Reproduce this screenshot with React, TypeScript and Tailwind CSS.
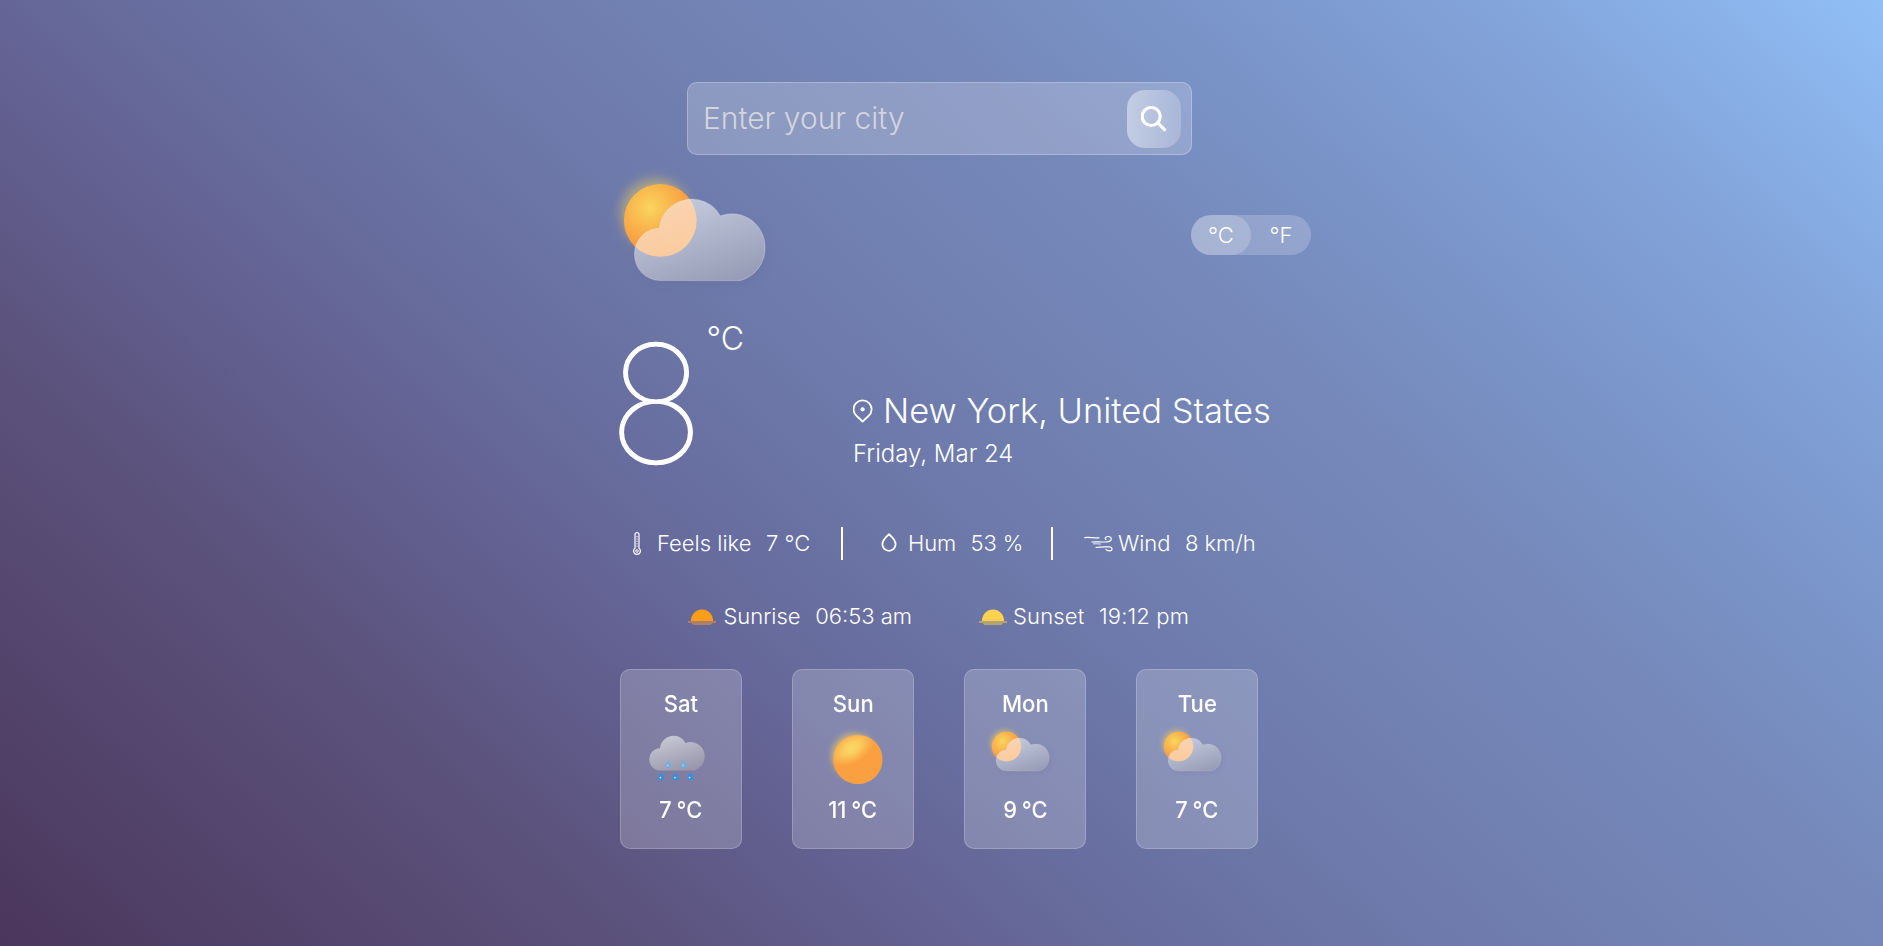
import type { ReactNode } from "react";

const CLOUD =
  "M60 120.6 A26 26 0 0 1 34.4 94.5 A26 26 0 0 1 59.4 68 A32.6 32.6 0 0 1 120.3 55.8 A33.2 33.2 0 0 1 165 87.5 A33.2 33.2 0 0 1 140 120.6 Z";

function PartlyCloudy({ id, className }: { id: string; className: string }) {
  return (
    <svg viewBox="0 0 200 140" className={className} aria-hidden="true">
      <defs>
        <radialGradient id={`${id}-sun`} cx="0.36" cy="0.32" r="0.56">
          <stop offset="0" stopColor="#fad560" />
          <stop offset="0.25" stopColor="#f9c656" />
          <stop offset="1" stopColor="#fb9a3e" />
        </radialGradient>
        <linearGradient id={`${id}-cloud`} x1="0.2" y1="0" x2="0.75" y2="1">
          <stop offset="0" stopColor="#c6cce0" />
          <stop offset="1" stopColor="#979db6" />
        </linearGradient>
        <linearGradient id={`${id}-edge`} x1="0" y1="0" x2="1" y2="1">
          <stop offset="0" stopColor="#ffffff" stopOpacity="0.1" />
          <stop offset="1" stopColor="#ffffff" stopOpacity="0.3" />
        </linearGradient>
        <linearGradient id={`${id}-warm`} x1="0.2" y1="0" x2="0.5" y2="1">
          <stop offset="0" stopColor="#f8d8ba" />
          <stop offset="1" stopColor="#fbcb9f" />
        </linearGradient>
        <clipPath id={`${id}-clip`}>
          <path d={CLOUD} />
        </clipPath>
        <filter id={`${id}-blur`} x="-50%" y="-50%" width="200%" height="200%">
          <feGaussianBlur stdDeviation="6" />
        </filter>
      </defs>
      <circle cx="55" cy="53" r="34" fill="#f6d25a" opacity="0.5" filter={`url(#${id}-blur)`} />
      <path d={CLOUD} fill="#5b6190" opacity="0.15" filter={`url(#${id}-blur)`} transform="translate(4 5)" />
      <circle cx="60.3" cy="60.4" r="36.4" fill={`url(#${id}-sun)`} />
      <path d={CLOUD} fill={`url(#${id}-cloud)`} />
      <circle cx="60.3" cy="60.4" r="36.4" fill={`url(#${id}-warm)`} clipPath={`url(#${id}-clip)`} />
      <path d={CLOUD} fill="none" stroke={`url(#${id}-edge)`} strokeWidth="1" />
    </svg>
  );
}

function Drop({ x, y, light }: { x: number; y: number; light?: boolean }) {
  return (
    <g transform={`translate(${x} ${y})`} opacity={light ? 0.75 : 1}>
      <path d="M0.3 -4.2 C1.8 -2.6 2.8 -1 2.8 0.6 A2.8 2.9 0 0 1 -2.8 0.6 C-2.8 -1 -1.4 -2.6 0.3 -4.2Z" fill={light ? "#63b1ea" : "#368fdb"} />
      <circle cx="-0.7" cy="0.8" r="0.9" fill="#c4e6ff" />
    </g>
  );
}

function RainCloud() {
  return (
    <svg viewBox="0 0 82 57" className="h-[57px] w-[82px] overflow-visible" aria-hidden="true">
      <defs>
        <linearGradient id="rain-cloud" x1="0.25" y1="0" x2="0.75" y2="1">
          <stop offset="0" stopColor="#c9c9d6" />
          <stop offset="1" stopColor="#9795aa" />
        </linearGradient>
      </defs>
      <g transform="translate(-3.3 -2.7) scale(0.424)">
        <path d={CLOUD} fill="url(#rain-cloud)" />
      </g>
      <Drop x={30.3} y={42.6} light />
      <Drop x={45.7} y={42.6} light />
      <Drop x={23.1} y={54.8} />
      <Drop x={37.7} y={54.8} />
      <Drop x={52.3} y={54.8} />
    </svg>
  );
}

function Sunny() {
  return (
    <svg viewBox="0 0 82 57" className="h-[57px] w-[82px] overflow-visible" aria-hidden="true">
      <defs>
        <radialGradient id="sunny" cx="0" cy="0" r="1" gradientUnits="userSpaceOnUse" gradientTransform="translate(41.5 26) rotate(-30) scale(25 15)">
          <stop offset="0" stopColor="#fad866" />
          <stop offset="0.3" stopColor="#fad060" />
          <stop offset="1" stopColor="#fba040" />
        </radialGradient>
        <filter id="sunny-blur" x="-50%" y="-50%" width="200%" height="200%">
          <feGaussianBlur stdDeviation="3" />
        </filter>
      </defs>
      <circle cx="44" cy="33.5" r="22" fill="#f4cf60" opacity="0.7" filter="url(#sunny-blur)" />
      <circle cx="47.9" cy="37.5" r="24.6" fill="url(#sunny)" />
    </svg>
  );
}

function HalfSun({ color, base }: { color: string; base: string }) {
  return (
    <svg viewBox="0 0 28 17" className="h-[17px] w-7" aria-hidden="true">
      <path d="M3 12 A11 11.5 0 0 1 25 12 Z" fill={color} />
      <path d="M0 12 H28 V14 H24.5 L22.5 16 H5.5 L3.5 14 H0Z" fill={base} />
    </svg>
  );
}

function Stat({ icon, label, value, className }: { icon: ReactNode; label: string; value: string; className: string }) {
  return (
    <div className={`flex items-center whitespace-nowrap ${className}`}>
      {icon}
      <span>{label}</span>
      <span className="ml-[14.6px]">{value}</span>
    </div>
  );
}

function DayCard({ day, temp, icon }: { day: string; temp: string; icon: ReactNode }) {
  return (
    <li className="flex h-[180px] w-[122px] flex-col items-center rounded-[10px] border border-white/20 bg-white/20 pt-[19px] text-[23px] leading-[30px] font-medium">
      <span className="scale-x-[0.96]">{day}</span>
      <div className="mt-[3px] mr-[4px] flex h-[57px] w-[82px]">{icon}</div>
      <span className="mt-4 scale-x-[0.95] [word-spacing:-1px]">{temp}</span>
    </li>
  );
}

export default function App() {
  return (
    <div className="h-[946px] overflow-hidden bg-[linear-gradient(43deg,#4b365c_0%,#5b527c_22%,#625f8f_31%,#666b9c_38%,#6d79aa_49%,#7182b3_58%,#7688ba_66%,#7a95c9_76%,#82a3da_86%,#90bff6_100%)] font-['Inter','Noto_Sans',sans-serif] font-light text-white">
      <main className="mx-auto w-[643px] pt-[82px]">
        <form className="ml-[67px] flex h-[73px] w-[505px] items-center justify-between rounded-[10px] border border-white/25 bg-white/20 pr-[10px] pl-[15px]">
          <input
            type="text"
            placeholder="Enter your city"
            className="h-full w-[400px] bg-transparent pb-0.5 text-[30px] font-light outline-none placeholder:text-[#d4d5dc]"
          />
          <button
            type="button"
            aria-label="Search"
            className="flex h-[58px] w-[54px] items-center justify-center rounded-[18px] bg-linear-to-r from-white/45 to-white/20"
          >
            <svg viewBox="0 0 26 26" className="h-[26px] w-[26px]" fill="none" stroke="#fff" strokeWidth="3.2" strokeLinecap="round" aria-hidden="true">
              <circle cx="10.2" cy="10.5" r="9" />
              <path d="M17 17.2 L23.5 23.7" />
            </svg>
          </button>
        </form>

        <section className="-mr-12 -ml-5 flex h-[145px] items-start justify-between pt-[5px]">
          <PartlyCloudy id="now" className="h-[140px] w-[200px]" />
          <div className="mt-[55px] flex h-10 w-[120px] rounded-full bg-white/20 text-[22px]">
            <button type="button" className="h-10 w-[60px] rounded-full bg-white/20">°C</button>
            <button type="button" className="h-10 w-[60px]">°F</button>
          </div>
        </section>

        <section className="flex h-[180px]">
          <div className="flex w-[233px] shrink-0 items-start">
            <span className="mt-[14px] -ml-[13.5px] block w-[98px] scale-x-[0.98] text-center text-[163.5px] leading-[180px] font-thin [-webkit-text-stroke:1.2px_white]">
              8
            </span>
            <span className="mt-[19px] ml-[2px] text-[32px] leading-10">°C</span>
          </div>
          <div className="pt-[90px]">
            <h1 className="flex items-center text-[34.5px] leading-[42px] whitespace-nowrap">
              <svg viewBox="0 0 20 24" className="mr-[10px] h-6 w-5" fill="none" stroke="#fff" strokeWidth="1.8" strokeLinejoin="round" aria-hidden="true">
                <path d="M9.6 22.5 L3.7 17 A9 8.9 0 1 1 15.5 17 Z" />
                <circle cx="9.6" cy="10.3" r="2.1" fill="#fff" stroke="none" />
              </svg>
              New York, United States
            </h1>
            <p className="mt-[7px] text-2xl leading-[30px]">Friday, Mar 24</p>
          </div>
        </section>

        <section className="mt-[47px] flex h-[33px] items-center text-[22px] leading-[33px]">
          <Stat
            className="w-[221px] pl-[13px]"
            label="Feels like"
            value="7 °C"
            icon={
              <svg viewBox="0 0 8 23" className="mr-4 h-[23px] w-2" fill="none" stroke="#fff" strokeWidth="1.2" aria-hidden="true">
                <path d="M2 16.2 V2.6 A2 2 0 0 1 6 2.6 V16.2 A3.4 3.4 0 1 1 2 16.2Z" />
                <circle cx="4" cy="19" r="1.3" strokeWidth="1" />
                <path d="M4 4 V15" strokeWidth="1" strokeDasharray="1.2 1.2" />
              </svg>
            }
          />
          <div className="h-[33px] w-0.5 bg-white" />
          <Stat
            className="w-[208px] pl-[38px] tracking-[-0.15px]"
            label="Hum"
            value="53 %"
            icon={
              <svg viewBox="0 0 16 20" className="mr-[11px] mb-0.5 h-5 w-4" fill="none" stroke="#fff" strokeWidth="1.8" strokeLinejoin="round" aria-hidden="true">
                <path d="M8 1.3 C10 3 14.6 7 14.6 11.3 A6.5 6.4 0 0 1 1.4 11.3 C1.4 7 6 3 8 1.3Z" />
              </svg>
            }
          />
          <div className="h-[33px] w-0.5 bg-white" />
          <Stat
            className="pl-[31px] tracking-[-0.05px]"
            label="Wind"
            value="8 km/h"
            icon={
              <svg viewBox="0 0 29 17" className="mr-[5px] h-[17px] w-[29px]" fill="none" stroke="#fff" strokeWidth="1.2" strokeLinecap="round" aria-hidden="true">
                <path d="M0.8 2.6 C5 1.9 9 3 15 2.8" />
                <path d="M8 7 C13 6.8 19 7.2 23.5 6.8 C28.5 6.2 28.3 1.4 24 1.5 C21 1.7 20.5 4 22 4.6" />
                <path d="M9.5 8.8 C11.5 8.7 14 8.9 16.5 9" strokeWidth="0.8" />
                <path d="M12 12.5 C16 11.6 21 12 25 11.8 C29 11.8 29 15.8 25.5 15.8 C23.5 15.7 22.5 15 22 14.3" />
              </svg>
            }
          />
        </section>

        <section className="mt-[39px] flex h-[33px] items-center text-[22px] leading-[32px]">
          <Stat className="w-[358.5px] pl-[68.4px]" label="Sunrise" value="06:53 am" icon={<span className="mr-[7px] pt-[3px]"><HalfSun color="#ff9e16" base="#ad8168" /></span>} />
          <Stat className="tracking-[0.15px]" label="Sunset" value="19:12 pm" icon={<span className="mr-[6.5px] pt-[3px]"><HalfSun color="#ffd24d" base="#b3a273" /></span>} />
        </section>

        <ul className="mt-[37px] flex gap-[50px]">
          <DayCard day="Sat" temp="7 °C" icon={<RainCloud />} />
          <DayCard day="Sun" temp="11 °C" icon={<Sunny />} />
          <DayCard day="Mon" temp="9 °C" icon={<PartlyCloudy id="mon" className="h-[57px] w-[81.4px]" />} />
          <DayCard day="Tue" temp="7 °C" icon={<PartlyCloudy id="tue" className="h-[57px] w-[81.4px]" />} />
        </ul>
      </main>
    </div>
  );
}
